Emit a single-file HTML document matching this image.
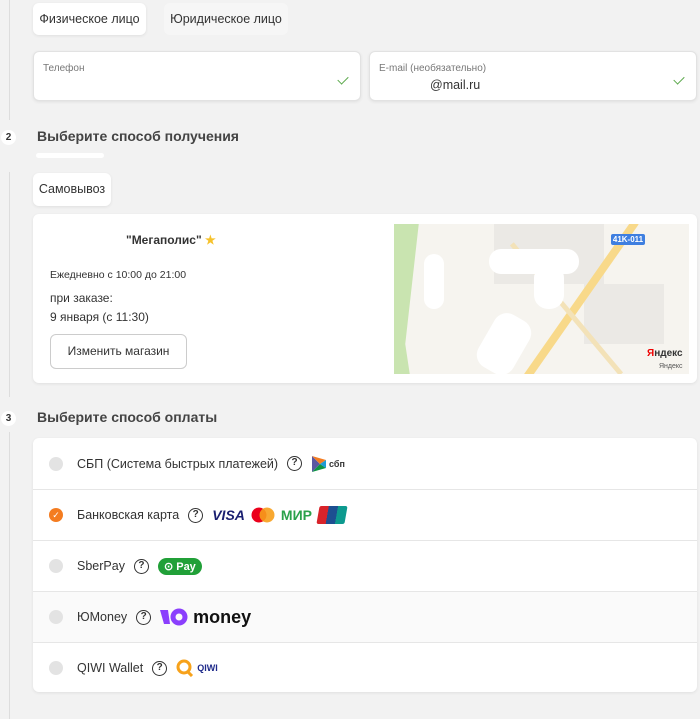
<!DOCTYPE html>
<html><head><meta charset="utf-8"><style>
*{box-sizing:border-box;margin:0;padding:0}
body{width:700px;height:719px;background:#f2f2f2;font-family:"Liberation Sans",sans-serif;color:#333;position:relative;overflow:hidden}
.a{position:absolute}
.vl{position:absolute;left:9px;width:1px;background:#ddd}
.card{position:absolute;background:#fff;border-radius:6px;box-shadow:0 1px 3px rgba(0,0,0,.08)}
.num{position:absolute;left:1px;width:15px;height:15px;border-radius:50%;background:#fff;font-size:10px;font-weight:bold;text-align:center;line-height:15px}
h2{position:absolute;left:37px;font-size:14px;font-weight:bold;color:#444}
.row{position:absolute;left:0;width:664px;height:51px;border-top:1px solid #e6e6e6;display:flex;align-items:center;padding-left:16px;font-size:12.5px}
.rad{width:14px;height:14px;border-radius:50%;background:#e3e3e3;margin-right:14px}
.q{width:15px;height:15px;border:1.5px solid #333;border-radius:50%;font-size:10px;font-weight:bold;text-align:center;line-height:12px;margin:0 9px}
.chk{position:absolute;width:10px;height:6px;border-left:1.5px solid #5aa84a;border-bottom:1.5px solid #5aa84a;transform:rotate(-45deg)}
</style></head><body>
<div class="vl" style="top:0;height:120px"></div>
<div class="vl" style="top:172px;height:225px"></div>
<div class="vl" style="top:432px;height:287px"></div>

<div class="card" style="left:33px;top:3px;width:113px;height:32px;font-size:12.5px;line-height:32px;text-align:center">Физическое лицо</div>
<div class="a" style="left:164px;top:3px;width:124px;height:32px;background:#f6f6f6;border-radius:6px;font-size:12.5px;line-height:32px;text-align:center">Юридическое лицо</div>

<div class="card" style="left:33px;top:51px;width:328px;height:50px;border:1px solid #e2e2e2"><div class="a" style="left:9px;top:11px;font-size:10px;color:#777">Телефон</div><div class="chk" style="left:304px;top:24px"></div></div>
<div class="card" style="left:369px;top:51px;width:328px;height:50px;border:1px solid #e2e2e2"><div class="a" style="left:9px;top:11px;font-size:10px;color:#777">E-mail (необязательно)</div><div class="a" style="left:60px;top:26px;font-size:12.5px">@mail.ru</div><div class="chk" style="left:304px;top:24px"></div></div>

<div class="num" style="top:130px">2</div>
<h2 style="top:128px">Выберите способ получения</h2>
<div class="a" style="left:36px;top:153px;width:68px;height:5px;background:#fff;border-radius:3px"></div>
<div class="card" style="left:33px;top:173px;width:78px;height:33px;font-size:12.5px;line-height:33px;text-align:center">Самовывоз</div>

<div class="card" style="left:33px;top:214px;width:664px;height:169px">
<div class="a" style="left:93px;top:19px;font-size:12px;font-weight:bold">"Мегаполис" <span style="color:#f6c22b">★</span></div>
<div class="a" style="left:17px;top:55px;font-size:10.5px">Ежедневно с 10:00 до 21:00</div>
<div class="a" style="left:17px;top:77px;font-size:12px">при заказе:</div>
<div class="a" style="left:17px;top:96px;font-size:12px">9 января (с 11:30)</div>
<div class="a" style="left:17px;top:120px;width:137px;height:35px;border:1px solid #ccc;border-radius:6px;font-size:12px;line-height:33px;text-align:center">Изменить магазин</div>
<div class="a" style="left:361px;top:10px;width:295px;height:150px;background:#f6f4ef;overflow:hidden">
<div class="a" style="left:100px;top:0;width:110px;height:60px;background:#ebe9e5"></div>
<div class="a" style="left:190px;top:60px;width:80px;height:60px;background:#ebe9e5"></div>
<div class="a" style="left:0;top:0;width:45px;height:150px;background:#c9e4b0;clip-path:polygon(0 0,55% 0,40% 40%,25% 80%,35% 100%,0 100%)"></div>
<div class="a" style="left:180px;top:-20px;width:8px;height:200px;background:#f8d98a;transform:rotate(35deg)"></div>
<div class="a" style="left:170px;top:0;width:5px;height:170px;background:#f3e2b8;transform:rotate(-40deg)"></div>
<div class="a" style="left:95px;top:25px;width:90px;height:25px;background:#fff;border-radius:12px"></div>
<div class="a" style="left:140px;top:40px;width:30px;height:45px;background:#fff;border-radius:14px"></div>
<div class="a" style="left:30px;top:30px;width:20px;height:55px;background:#fff;border-radius:10px"></div>
<div class="a" style="left:90px;top:90px;width:40px;height:60px;background:#fff;border-radius:14px;transform:rotate(30deg)"></div>
<div class="a" style="left:217px;top:10px;width:34px;height:11px;background:#3f7fe0;border-radius:2px;color:#fff;font-size:8px;font-weight:bold;text-align:center;line-height:11px">41K-011</div>
<div class="a" style="left:253px;top:124px;font-size:10px;font-weight:bold"><span style="color:#e00">Я</span>ндекс</div>
<div class="a" style="left:265px;top:139px;font-size:7px;color:#555">Яндекс</div>
</div></div>

<div class="num" style="top:411px">3</div>
<h2 style="top:409px">Выберите способ оплаты</h2>

<div class="card" style="left:33px;top:438px;width:664px;height:254px;overflow:hidden">
<div class="row" style="top:0;border-top:none">
<div class="rad"></div>СБП (Система быстрых платежей)<div class="q">?</div>
<svg width="16" height="18" viewBox="0 0 16 18"><path d="M1 1L9 9L1 17Z" fill="#5b57a2"/><path d="M1 1L15 5L9 9Z" fill="#f47c20"/><path d="M1 17L15 13L9 9Z" fill="#0d9444"/><path d="M9 9L15 5V13Z" fill="#1d9ad6"/></svg><b style="font-size:9px;margin-left:2px">сбп</b></div>
<div class="row" style="top:51px">
<div class="rad" style="background:#f47c20;color:#fff;font-size:9px;text-align:center;line-height:14px">✓</div>Банковская карта<div class="q">?</div>
<b style="font-style:italic;color:#1a1f71;font-size:14px;margin-right:6px">VISA</b>
<svg width="24" height="16"><circle cx="8" cy="8" r="7.5" fill="#eb001b"/><circle cx="16" cy="8" r="7.5" fill="#f79e1b" opacity=".9"/></svg>
<b style="color:#2aa14a;font-size:14px;margin:0 6px">МИР</b>
<div style="width:28px;height:18px;background:linear-gradient(90deg,#d8232a 33%,#1d4f91 33% 66%,#0d9a8f 66%);transform:skewX(-10deg);border-radius:2px"></div></div>
<div class="row" style="top:102px">
<div class="rad"></div>SberPay<div class="q">?</div>
<div style="background:#21a038;color:#fff;border-radius:10px;padding:2px 6px;font-size:11px;font-weight:bold">⊙ Pay</div></div>
<div class="row" style="top:153px;background:#fafafa">
<div class="rad"></div>ЮMoney<div class="q">?</div>
<svg width="28" height="18" viewBox="0 0 28 18"><path d="M0 2L8 2L10 16L4 16Z" fill="#8b3ffd"/><circle cx="19" cy="9" r="8.5" fill="#8b3ffd"/><circle cx="19" cy="9" r="3.5" fill="#fafafa"/></svg><b style="font-size:18px;color:#111;margin-left:5px">money</b></div>
<div class="row" style="top:204px">
<div class="rad"></div>QIWI Wallet<div class="q">?</div>
<svg width="18" height="18"><circle cx="8" cy="8" r="6" fill="none" stroke="#f7a21b" stroke-width="3"/><path d="M11 12L16 17" stroke="#f7a21b" stroke-width="3"/></svg><b style="color:#1e2a8a;font-size:9px;margin-left:3px">QIWI</b></div>
</div>
</body></html>
